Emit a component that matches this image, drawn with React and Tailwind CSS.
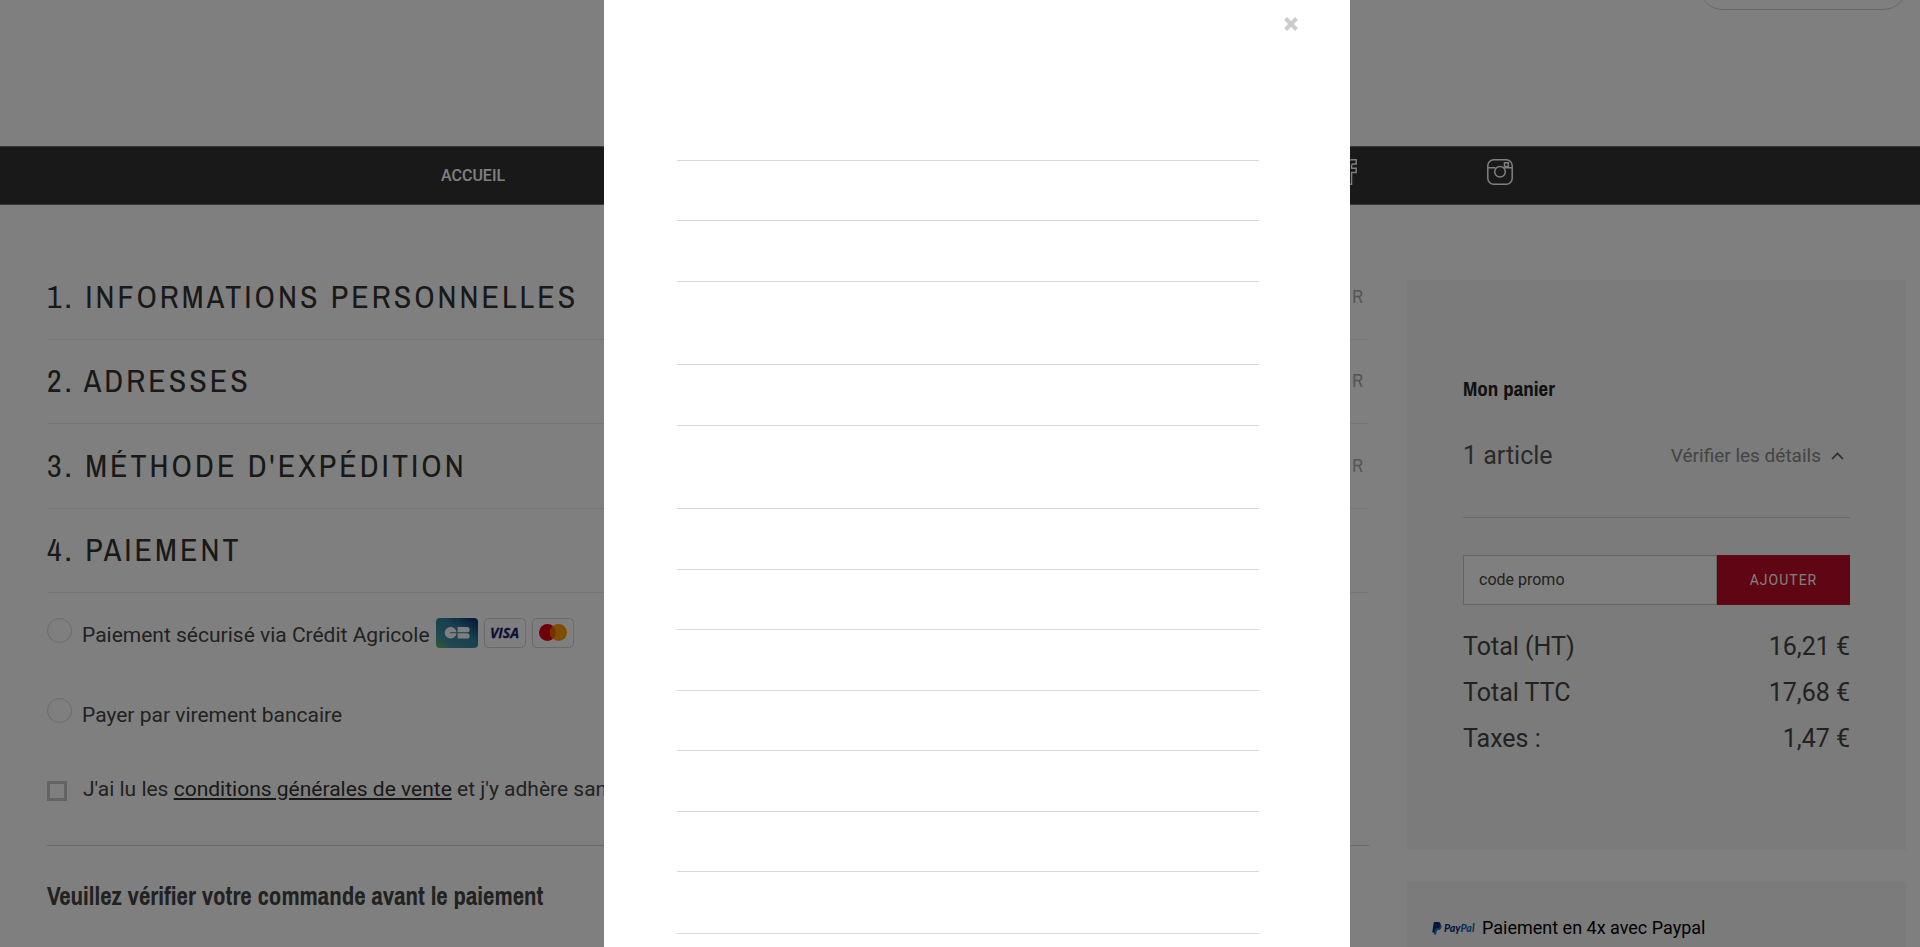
const steps = [
  { title: '1. Informations personnelles', editable: true },
  { title: '2. Adresses', editable: true },
  { title: "3. Méthode d'expédition", editable: true },
  { title: '4. Paiement', editable: false },
]

const totals = [
  { label: 'Total (HT)', value: '16,21 €' },
  { label: 'Total TTC', value: '17,68 €' },
  { label: 'Taxes :', value: '1,47 €' },
]

function FacebookIcon() {
  return (
    <svg width="26" height="26" viewBox="0 0 26 26" fill="none" stroke="currentColor" strokeWidth="1.400">
      <path d="M9 25.200V13.500H5.500V9.200H9V6.300C9 2.800 11.100.8 14.500.8h4.700V5h-2.900c-1.300 0-1.700.6-1.700 1.700v2.500h4.600v4.300h-4.600v11.700z" />
    </svg>
  )
}

function InstagramIcon() {
  return (
    <svg width="26" height="26" viewBox="0 0 26 26" fill="none" stroke="currentColor" strokeWidth="1.500">
      <rect x="0.800" y="0.800" width="24.400" height="24.400" rx="6" />
      <path d="M1 8.800h7.500M17.500 8.800H25" />
      <circle cx="13" cy="12.800" r="5.300" />
      <rect x="17.500" y="3.800" width="3.800" height="3.800" />
    </svg>
  )
}

function CbLogo() {
  return (
    <svg width="42" height="30" viewBox="0 0 42 30" aria-label="CB" role="img">
      <defs>
        <linearGradient id="cb" x1="0" y1="1" x2="1" y2="0">
          <stop offset="0" stopColor="#5fb65a" />
          <stop offset="0.22" stopColor="#4293a0" />
          <stop offset="0.6" stopColor="#2f7f9f" />
          <stop offset="1" stopColor="#062a66" />
        </linearGradient>
      </defs>
      <rect width="42" height="30" rx="4" fill="url(#cb)" />
      <path fill="#fff" d="M20.500 14.300H14v1h6.500c-.4 3.200-2.800 5.200-6 5.200A5.700 5.700 0 0 1 8.700 14.800 5.700 5.700 0 0 1 14.500 9c3.200 0 5.600 2.100 6 5.300z" />
      <path fill="#fff" d="M21.600 9H31a2.650 2.650 0 0 1 0 5.300h-9.400zM21.600 15.300H31a2.650 2.650 0 0 1 0 5.300h-9.400z" />
    </svg>
  )
}

function VisaLogo() {
  return (
    <svg width="42" height="30" viewBox="0 0 42 30">
      <rect x="0.500" y="0.500" width="41" height="29" rx="4" fill="#fff" stroke="#d5d5d5" />
      <text x="20.500" y="19.500" textAnchor="middle" fontFamily="Open Sans, sans-serif" fontSize="14" fontWeight="700" fontStyle="italic" fill="#1a1f71" stroke="#1a1f71" strokeWidth="0.300">
        VISA
      </text>
    </svg>
  )
}

function MastercardLogo() {
  return (
    <svg width="42" height="30" viewBox="0 0 42 30" aria-label="Mastercard" role="img">
      <rect x="0.500" y="0.500" width="41" height="29" rx="4" fill="#fff" stroke="#d5d5d5" />
      <circle cx="15.500" cy="14.500" r="8.500" fill="#e00010" />
      <circle cx="26.500" cy="14.500" r="8.500" fill="#fb9c05" />
      <path d="M21 8a8.500 8.500 0 0 1 0 13 8.500 8.500 0 0 1 0-13z" fill="#f06400" />
    </svg>
  )
}

function PaypalLogo() {
  return (
    <svg width="44" height="14" viewBox="0 0 44 14">
      <path fill="#1a7fd0" d="M3.500 3.500h4.800c2 .5 1.800 5.500-2.100 5.800H5L4.200 13.500H1.800z" />
      <path fill="#0b2f7a" d="M1.800 1h4.400c3.800.2 3 6.300-1 6.400H3.500L2.700 11.500H.2z" />
      <text x="12" y="10.500" fontFamily="Lato, sans-serif" fontSize="10.500" fontWeight="900" fontStyle="italic" fill="#0b2f7a">
        Pay<tspan fill="#1468b8">Pal</tspan>
      </text>
    </svg>
  )
}

function Header() {
  return (
    <header>
      <div className="flex h-[146px] items-start justify-end overflow-hidden pr-3">
        <div className="-mt-10 h-[50px] w-[210px] rounded-full border border-[#d0d0d0]"></div>
      </div>
      <nav className="h-[59px] border-y border-[#707070] bg-[#333] pl-[34px]">
        <div className="mx-auto flex h-full max-w-[1072px] items-center justify-between text-white">
          <a href="#accueil" className="text-base font-medium">ACCUEIL</a>
          <div className="flex gap-[124px] pb-2">
            <a href="#facebook" aria-label="Facebook"><FacebookIcon /></a>
            <a href="#instagram" aria-label="Instagram"><InstagramIcon /></a>
          </div>
        </div>
      </nav>
    </header>
  )
}

function Checkout() {
  return (
    <main className="min-w-0 flex-1 pt-[50px]">
      <div className="grid h-[338px] grid-rows-4">
        {steps.map((step) => (
          <div key={step.title} className="flex items-center justify-between border-b border-[#ececec] pr-1 font-['Archivo_Narrow','Liberation_Sans_Narrow',sans-serif] uppercase">
            <h2 className="text-[32px] leading-9 tracking-[3px] text-[#333]">{step.title}</h2>
            {step.editable && (
              <button className="text-lg leading-6 tracking-[2px] text-[#aaa] uppercase">Modifier</button>
            )}
          </div>
        ))}
      </div>

      <form className="pt-[25px] text-[21px] leading-[34px] text-[#444]">
        <div className="flex items-start gap-[10px]">
          <input id="card" type="radio" name="payment" className="size-[25px] appearance-none rounded-full border border-[#d8d8d8]" />
          <label htmlFor="card" className="flex gap-[6px]">
            Paiement sécurisé via Crédit Agricole
            <span className="flex h-[30px] gap-[6px]">
              <CbLogo />
              <VisaLogo />
              <MastercardLogo />
            </span>
          </label>
        </div>
        <div className="mt-[46px] flex items-start gap-[10px]">
          <input id="transfer" type="radio" name="payment" className="size-[25px] appearance-none rounded-full border border-[#d8d8d8]" />
          <label htmlFor="transfer">Payer par virement bancaire</label>
        </div>
        <div className="mt-10 flex items-start gap-4">
          <input id="terms" type="checkbox" className="mt-[9px] size-5 appearance-none border-3 border-[#c8c8c8]" />
          <label htmlFor="terms">
            J'ai lu les <a href="#cgv" className="text-[#333] underline">conditions générales de vente</a> et j'y adhère sans réserve.
          </label>
        </div>
      </form>

      <h3 className="mt-[39px] border-t border-[#d5d5d5] pt-[34px] font-['Archivo_Narrow','Liberation_Sans_Narrow',sans-serif] text-[25px] leading-8 font-bold text-[#444]">
        Veuillez vérifier votre commande avant le paiement
      </h3>
    </main>
  )
}

function Cart() {
  return (
    <aside className="w-[499px] shrink-0 pt-[75px]">
      <section className="h-[570px] bg-[#f7f7f7] px-14 pt-[97px]">
        <h2 className="font-['Archivo_Narrow','Liberation_Sans_Narrow',sans-serif] text-[21px] leading-6 font-bold text-[#222]">Mon panier</h2>
        <div className="mt-[39px] flex items-center justify-between border-b border-[#d5d5d5] pb-[45px] leading-8 text-[#555]">
          <span className="text-[25px] leading-8">1 article</span>
          <a href="#details" className="flex items-center gap-[10px] pr-[6px] text-[19px] leading-8 text-[#888]">
            Vérifier les détails
            <svg width="13" height="8" viewBox="0 0 13 8" fill="none" stroke="#555" strokeWidth="1.600">
              <path d="M1 7l5.500-5.500L12 7" />
            </svg>
          </a>
        </div>
        <form className="mt-[37px] flex h-[50px]">
          <input
            type="text"
            aria-label="code promo"
            placeholder="code promo"
            className="min-w-0 flex-1 border border-[#c8c8c8] bg-white px-[15px] text-base text-[#444] placeholder:text-[#444]"
          />
          <button type="button" className="w-[133px] bg-[#c00a26] text-sm tracking-[1px] text-white">AJOUTER</button>
        </form>
        <dl className="mt-[19px] text-[25px] leading-[46px] text-[#444]">
          {totals.map((row) => (
            <div key={row.label} className="flex justify-between">
              <dt>{row.label}</dt>
              <dd>{row.value}</dd>
            </div>
          ))}
        </dl>
      </section>
      <section className="mt-8 flex h-[120px] items-start gap-[6px] bg-[#f7f7f7] px-[25px] pt-[34px] text-lg leading-6 text-black">
        <span className="flex h-6 items-center"><PaypalLogo /></span>
        Paiement en 4x avec Paypal
      </section>
    </aside>
  )
}

function Modal() {
  return (
    <div className="absolute inset-0 flex justify-center overflow-hidden bg-black/50 pl-[34px]">
      <div role="dialog" aria-modal="true" className="w-[746px] bg-white pr-[91px] pl-[73px]">
        <div className="-mr-[40px] flex h-[160px] items-start justify-end pt-4">
          <button aria-label="Fermer" className="text-[#ccc]">
            <svg width="16" height="16" viewBox="0 0 16 16" fill="none" stroke="currentColor" strokeWidth="4">
              <path d="M2.500 2.500l11 11M13.500 2.500l-11 11" />
            </svg>
          </button>
        </div>
        <div className="h-[122px] divide-y divide-[#d8d8d8] border-y border-[#d8d8d8] *:h-[60px]">
          <div></div>
          <div></div>
        </div>
        <div className="h-[83px] border-b border-[#d8d8d8]"></div>
        <div className="h-[61px] border-b border-[#d8d8d8]"></div>
        <div className="h-[83px] border-b border-[#d8d8d8]"></div>
        <div className="grid h-[425px] grid-rows-7 divide-y divide-[#d8d8d8] border-b border-[#d8d8d8]">
          <div></div>
          <div></div>
          <div></div>
          <div></div>
          <div></div>
          <div></div>
          <div></div>
        </div>
      </div>
    </div>
  )
}

export default function App() {
  return (
    <div className="relative h-screen overflow-hidden bg-white font-['Roboto',sans-serif]">
      <Header />
      <div className="flex gap-[38px] pr-[14px] pl-[47px]">
        <Checkout />
        <Cart />
      </div>
      <Modal />
    </div>
  )
}
